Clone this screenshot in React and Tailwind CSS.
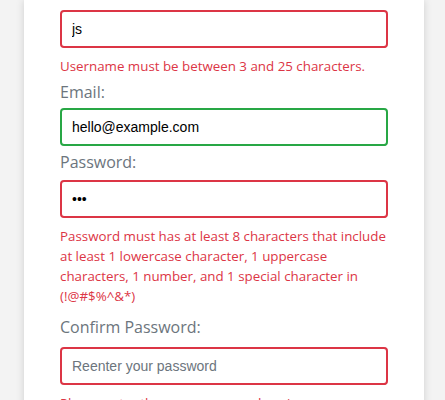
import React, { useState } from 'react';

const SignUpForm = () => {
  const [formData, setFormData] = useState({
    username: 'js',
    email: 'hello@example.com',
    password: 'abc',
    confirmPassword: ''
  });

  const handleChange = (e) => {
    const { name, value } = e.target;
    setFormData((prev) => ({ ...prev, [name]: value }));
  };

  const inputBase =
    "block w-full h-[38px] border-2 rounded-[4px] px-[10px] bg-white text-[14px] text-black font-['Liberation_Sans',Arial,sans-serif] placeholder:text-[#6c757d] focus:outline-none";

  return (
    <div className="min-h-[400px] bg-[#f3f3f3] font-['Open_Sans',sans-serif]">
      <div className="ml-[24px] w-[400px] min-h-[400px] bg-white shadow-[0_0_8px_rgba(0,0,0,0.15)] px-[36px] pt-[10px] pb-[20px]">
        {/* Username */}
        <input
          type="text"
          name="username"
          value={formData.username}
          onChange={handleChange}
          className={`${inputBase} border-[#dc3545]`}
        />
        <p className="mt-[8px] text-[13.33px] leading-[20px] text-[#dc3545]">
          Username must be between 3 and 25 characters.
        </p>

        {/* Email */}
        <label className="block mt-[4px] text-[16px] leading-[24px] text-[#6c757d]">Email:</label>
        <input
          type="email"
          name="email"
          value={formData.email}
          onChange={handleChange}
          className={`${inputBase} mt-[4px] border-[#28a745]`}
        />

        {/* Password */}
        <label className="block mt-[4px] text-[16px] leading-[24px] text-[#6c757d]">Password:</label>
        <input
          type="password"
          name="password"
          value={formData.password}
          onChange={handleChange}
          className={`${inputBase} mt-[6px] border-[#dc3545]`}
        />
        <p className="mt-[8px] text-[13.33px] leading-[20px] text-[#dc3545]">
          Password must has at least 8 characters that include at least 1 lowercase character, 1 uppercase characters, 1 number, and 1 special character in (!@#$%^&*)
        </p>

        {/* Confirm Password */}
        <label className="block mt-[9px] text-[16px] leading-[24px] text-[#6c757d]">Confirm Password:</label>
        <input
          type="password"
          name="confirmPassword"
          value={formData.confirmPassword}
          onChange={handleChange}
          placeholder="Reenter your password"
          className={`${inputBase} mt-[8px] border-[#dc3545]`}
        />
        <p className="mt-[8px] text-[13.33px] leading-[20px] text-[#dc3545]">
          Please enter the same password again.
        </p>
      </div>
    </div>
  );
};

export default SignUpForm;
